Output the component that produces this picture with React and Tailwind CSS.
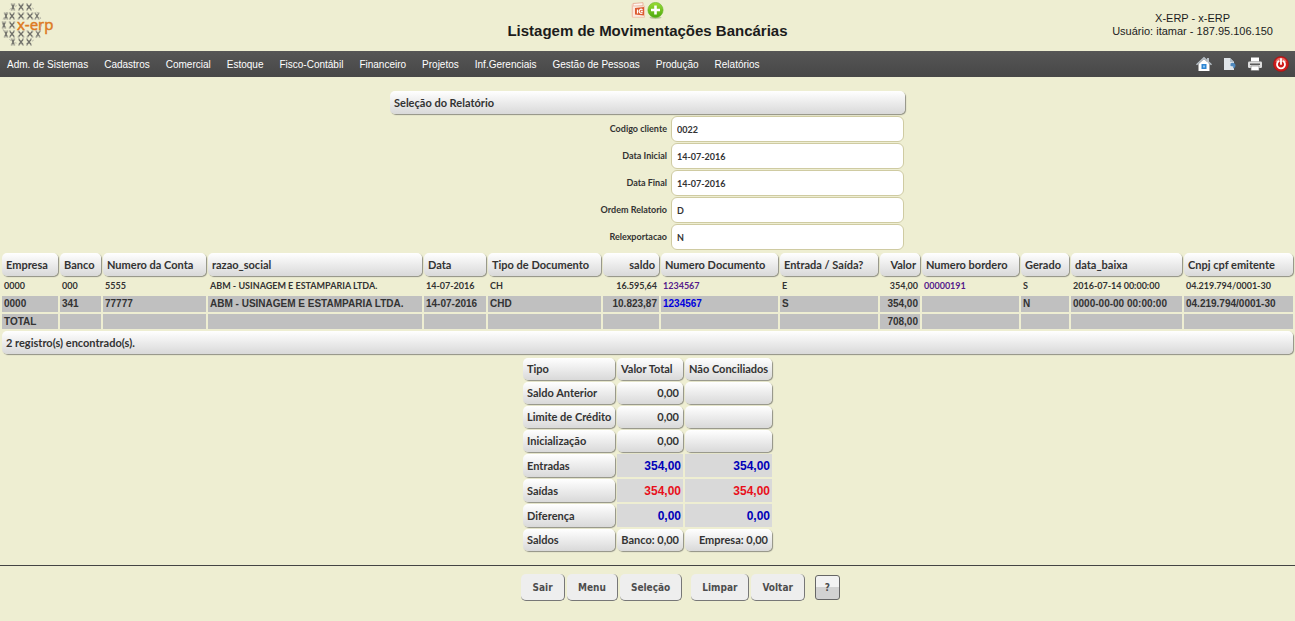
const menuItems = [
  "Adm. de Sistemas",
  "Cadastros",
  "Comercial",
  "Estoque",
  "Fisco-Contábil",
  "Financeiro",
  "Projetos",
  "Inf.Gerenciais",
  "Gestão de Pessoas",
  "Produção",
  "Relatórios",
];

const filters = [
  { id: "codigo", label: "Codigo cliente", value: "0022" },
  { id: "inicial", label: "Data Inicial", value: "14-07-2016" },
  { id: "final", label: "Data Final", value: "14-07-2016" },
  { id: "ordem", label: "Ordem Relatorio", value: "D" },
  { id: "relexportacao", label: "Relexportacao", value: "N" },
];

const columns = [
  { title: "Empresa", width: "w-[56px]" },
  { title: "Banco", width: "w-[41px]" },
  { title: "Numero da Conta", width: "w-[103px]" },
  { title: "razao_social", width: "w-auto" },
  { title: "Data", width: "w-[62px]" },
  { title: "Tipo de Documento", width: "w-[113px]" },
  { title: "saldo", width: "w-[56px]", right: true },
  { title: "Numero Documento", width: "w-[117px]" },
  { title: "Entrada / Saída?", width: "w-[98px]" },
  { title: "Valor", width: "w-[40px]", right: true },
  { title: "Numero bordero", width: "w-[97px]" },
  { title: "Gerado", width: "w-[48px]" },
  { title: "data_baixa", width: "w-[111px]" },
  { title: "Cnpj cpf emitente", width: "w-[109px]" },
];

const firstRow = [
  "0000", "000", "5555", "ABM - USINAGEM E ESTAMPARIA LTDA.", "14-07-2016", "CH", "16.595,64",
  "1234567", "E", "354,00", "00000191", "S", "2016-07-14 00:00:00", "04.219.794/0001-30",
];

const secondRow = [
  "0000", "341", "77777", "ABM - USINAGEM E ESTAMPARIA LTDA.", "14-07-2016", "CHD", "10.823,87",
  "1234567", "S", "354,00", "", "N", "0000-00-00 00:00:00", "04.219.794/0001-30",
];

const totalRow = ["TOTAL", "", "", "", "", "", "", "", "", "708,00", "", "", "", ""];

const summary = [
  { label: "Saldo Anterior", total: "0,00", pending: "" },
  { label: "Limite de Crédito", total: "0,00", pending: "" },
  { label: "Inicialização", total: "0,00", pending: "" },
  { label: "Entradas", total: "354,00", pending: "354,00", color: "text-[#0000b8]" },
  { label: "Saídas", total: "354,00", pending: "354,00", color: "text-[#e8101c]" },
  { label: "Diferença", total: "0,00", pending: "0,00", color: "text-[#0000b8]" },
  { label: "Saldos", total: "Banco: 0,00", pending: "Empresa: 0,00" },
];

const sans = "font-['Liberation_Sans',Arial,sans-serif]";
const lato = "font-['Lato',sans-serif]";
const panel =
  "rounded-[5px] bg-linear-to-b from-white to-[#d9d9d9] shadow-[1px_1px_1px_#8f8f84] text-[#333] font-bold";

// x marks that make up the globe, outer ones are narrower
const globeRows = [
  { y: 7, marks: [[13, 1.2], [21, 2], [29, 2]] },
  { y: 16, marks: [[6, 1.2], [12, 2], [21, 2.4], [30, 2.4], [37, 1.6]] },
  { y: 25, marks: [[4, 1.2], [12, 2.2]] },
  { y: 34, marks: [[6, 1.2], [12, 2], [21, 2.4], [30, 2.4], [38, 1.6]] },
  { y: 42, marks: [[13, 1.2], [21, 2], [29, 2]] },
];

function Logo() {
  return (
    <svg width="56" height="48" viewBox="0 0 56 48" aria-label="x-erp">
      <circle cx="22" cy="24.5" r="19.5" fill="none" stroke="#b5b5a6" strokeWidth="1" strokeDasharray="2 4" />
      <g fill="none">
        {globeRows.map(({ y, marks }) =>
          marks.map(([x, r]) => (
            <g key={`${x}-${y}`}>
              <path
                d={`M${x - r} ${y - 2.5}L${x + r} ${y + 2.5}M${x + r} ${y - 2.5}L${x - r} ${y + 2.5}`}
                stroke="#6f6f69"
                strokeWidth="1.3"
              />
              <path
                d={`M${x - r - 1} ${y - 3}h1.8M${x + r - 0.8} ${y - 3}h1.8M${x - r - 1} ${y + 3}h1.8M${x + r - 0.8} ${y + 3}h1.8`}
                stroke="#8d8d84"
                strokeWidth="0.9"
              />
            </g>
          ))
        )}
      </g>
      <text x="17" y="30" fontSize="15" fill="#dd7a22" stroke="#dd7a22" strokeWidth="0.5" fontFamily="Open Sans, sans-serif">
        x-erp
      </text>
    </svg>
  );
}

function SlideIcon() {
  return (
    <svg width="16" height="16" viewBox="0 0 16 16">
      <path d="M3 1.500l10-.8v3l-10 .8z" fill="#fff6f0" stroke="#e6a58c" strokeWidth=".8" />
      <path d="M1.500 2.500L3.500 1.500v12l-2 1.500z" fill="#f6cdbb" />
      <path d="M2.500 4v11.300h12V4z" fill="#fbe9df" stroke="#eebca6" strokeWidth=".8" />
      <path d="M5 6l9-1v8.500l-9-1z" fill="#dc5a30" />
      <path d="M7.500 11.500V7.500M12.500 7.800a2 2 0 1 0 0 3M10.800 9.300h2" stroke="#fff" strokeWidth="1.200" fill="none" />
    </svg>
  );
}

function PlusIcon() {
  return (
    <svg width="17" height="17" viewBox="0 0 17 17">
      <defs>
        <linearGradient id="plus" x1="0" y1="0" x2="0" y2="1">
          <stop offset="0" stopColor="#9bdc35" />
          <stop offset="1" stopColor="#4ca90e" />
        </linearGradient>
      </defs>
      <ellipse cx="8.500" cy="15.500" rx="6" ry="1.500" fill="#bcc89b" />
      <circle cx="8.500" cy="8" r="7.600" fill="url(#plus)" stroke="#62b422" strokeWidth=".6" />
      <path d="M8.500 3.500v9M4 8h9" stroke="#fff" strokeWidth="2.600" />
    </svg>
  );
}

function HomeIcon() {
  return (
    <svg width="18" height="16" viewBox="0 0 18 16">
      <path d="M12 2h2v5h-2z" fill="#b9c0c6" />
      <path d="M3.500 8L9 3l5.500 5v7h-11z" fill="#fff" />
      <path d="M1.500 8.800L9 1.800l7.500 7" fill="none" stroke="#b8c1c8" strokeWidth="1.500" />
      <rect x="6.500" y="8" width="5" height="5" fill="#2f86d3" />
      <path d="M8 9.500h2v2H8z" fill="#8ac6f2" />
    </svg>
  );
}

function PageIcon() {
  return (
    <svg width="14" height="16" viewBox="0 0 14 16">
      <path d="M1 2h6l4 4v8H1z" fill="#dfe4e8" />
      <path d="M7 2v4h4z" fill="#b3bfc9" />
      <path d="M7.500 7.500c2-1.500 5-.5 5 2 0 1.500-1 2.500-2.500 3l.3-2-2.800-.5z" fill="#4e88bd" />
    </svg>
  );
}

function PrinterIcon() {
  return (
    <svg width="16" height="16" viewBox="0 0 16 16">
      <path d="M4 1.500h8v4H4z" fill="#fff" />
      <rect x="1" y="5.500" width="14" height="6.500" rx="1.200" fill="#dedede" />
      <path d="M3 7.500h10v1.500h-10z" fill="#5b5b5b" />
      <path d="M4 10h8v4.500H4z" fill="#fff" stroke="#777" strokeWidth=".6" />
    </svg>
  );
}

function PowerIcon() {
  return (
    <svg width="16" height="16" viewBox="0 0 16 16">
      <circle cx="8" cy="8" r="7.500" fill="#cf1c1c" stroke="#a80f0f" strokeWidth=".6" />
      <path d="M2.500 6a5.700 5.700 0 0 1 11 0" fill="#e96c65" />
      <path d="M5.500 5.300a4 4 0 1 0 5 0M8 3v5" fill="none" stroke="#fff" strokeWidth="1.800" strokeLinecap="round" />
    </svg>
  );
}

function Header() {
  return (
    <header className={`grid h-[51px] grid-cols-[1fr_auto_1fr] text-[#1c1c1c] ${sans}`}>
      <div>
        <Logo />
      </div>
      <div className="flex flex-col items-center gap-1 pt-[2px]">
        <div className="flex gap-px">
          <a href="#slides" aria-label="Exportar">
            <SlideIcon />
          </a>
          <a href="#novo" aria-label="Novo">
            <PlusIcon />
          </a>
        </div>
        <h1 className="text-[15px] leading-4 font-bold whitespace-nowrap">Listagem de Movimentações Bancárias</h1>
      </div>
      <div className="justify-self-end pt-3 pr-[22px] text-center text-[11px] leading-[13px]">
        <p>X-ERP - x-ERP</p>
        <p>Usuário: itamar - 187.95.106.150</p>
      </div>
    </header>
  );
}

function MenuBar() {
  return (
    <nav
      className={`flex h-[26px] items-center justify-between bg-linear-to-b from-[#565656] to-[#474747] pr-[6px] pl-[7px] text-[10px] text-white ${sans}`}
    >
      <ul className="flex gap-4 whitespace-nowrap">
        {menuItems.map((item) => (
          <li key={item}>
            <a href="#menu">{item}</a>
          </li>
        ))}
      </ul>
      <div className="flex items-center gap-[10px]">
        <a href="#home" aria-label="Início"><HomeIcon /></a>
        <a href="#pagina" aria-label="Página"><PageIcon /></a>
        <a href="#imprimir" aria-label="Imprimir"><PrinterIcon /></a>
        <a href="#sair" aria-label="Desligar"><PowerIcon /></a>
      </div>
    </nav>
  );
}

function Filters() {
  return (
    <form className={`mx-auto mt-[14px] w-full max-w-[515px] ${lato}`}>
      <h2 className={`px-1 text-[11px] leading-[23px] ${panel}`}>Seleção do Relatório</h2>
      <div className="mt-[2px] mr-px grid gap-px">
        {filters.map(({ id, label, value }) => (
          <div key={id} className="flex items-center justify-end gap-1 text-[9px] font-bold text-[#333]">
            <label htmlFor={id}>{label}</label>
            <input
              id={id}
              defaultValue={value}
              className="h-[26px] w-[233px] rounded-[6px] border border-[#cfcba2] bg-white px-[5px]"
            />
          </div>
        ))}
      </div>
    </form>
  );
}

function Cells({ row, linkColor, cell }) {
  return row.map((value, i) => (
    <td key={columns[i].title} className={`px-0.5 py-0 ${cell} ${columns[i].right ? "text-right" : "text-left"}`}>
      {value && (i === 7 || i === 10) ? (
        <a href="#documento" className={linkColor}>{value}</a>
      ) : (
        value
      )}
    </td>
  ));
}

function Movements() {
  return (
    <table className="mt-px w-full table-fixed border-separate border-spacing-[2px] font-bold whitespace-nowrap text-[#333]">
      <colgroup>
        {columns.map(({ title, width }) => (
          <col key={title} className={width} />
        ))}
      </colgroup>
      <thead className={lato}>
        <tr>
          {columns.map(({ title, right }) => (
            <th key={title} className={`px-1 py-0 text-[11px] leading-[23px] ${panel} ${right ? "text-right" : "text-left"}`}>
              {title}
            </th>
          ))}
        </tr>
      </thead>
      <tbody>
        <tr className={`text-[9px] leading-4 ${lato}`}>
          <Cells row={firstRow} linkColor="text-[#551a8b]" cell="" />
        </tr>
        <tr className={`text-[10px] leading-4 ${sans}`}>
          <Cells row={secondRow} linkColor="text-[#0000dd]" cell="bg-[#c0c0c0]" />
        </tr>
        <tr className={`text-[10px] leading-[15px] ${sans}`}>
          <Cells row={totalRow} linkColor="" cell="bg-[#c0c0c0]" />
        </tr>
      </tbody>
      <tfoot className={lato}>
        <tr>
          <td colSpan={14} className={`px-1 py-0 text-[11px] leading-[23px] ${panel}`}>2 registro(s) encontrado(s).</td>
        </tr>
      </tfoot>
    </table>
  );
}

function Summary() {
  const head = `h-[22px] px-1 py-0 text-[11px] leading-[22px] ${panel}`;
  return (
    <table className={`mx-auto w-[253px] table-fixed border-separate border-spacing-[2px] whitespace-nowrap ${lato}`}>
      <colgroup>
        <col className="w-[92px]" />
        <col className="w-[66px]" />
        <col className="w-[87px]" />
      </colgroup>
      <thead>
        <tr>
          <th className={`text-left ${head}`}>Tipo</th>
          <th className={`text-left ${head}`}>Valor Total</th>
          <th className={`text-left ${head}`}>Não Conciliados</th>
        </tr>
      </thead>
      <tbody>
        {summary.map(({ label, total, pending, color }) => {
          const value = color
            ? `h-[23px] bg-[#d9d9d9] px-0.5 py-0 text-right text-[12px] font-bold ${sans} ${color}`
            : `text-right ${head}`;
          return (
            <tr key={label}>
              <th className={`text-left ${head}`}>{label}</th>
              <td className={value}>{total}</td>
              <td className={value}>{pending}</td>
            </tr>
          );
        })}
      </tbody>
    </table>
  );
}

function ActionButton({ children }) {
  return (
    <button
      type="button"
      className="h-[27px] min-w-[44px] rounded-[5px] border-r border-b border-[#777] bg-[#eee] px-[11px] text-[10px] font-bold text-[#4d4d4d]"
    >
      {children}
    </button>
  );
}

export default function App() {
  return (
    <div className="min-h-screen bg-[#eeeed2]">
      <Header />
      <MenuBar />
      <main>
        <Filters />
        <Movements />
        <Summary />
      </main>
      <footer className="mt-3 flex items-center justify-center border-t border-[#444] pt-2 pl-[66px] font-['DejaVu_Sans_Condensed','DejaVu_Sans',sans-serif]">
        <div className="flex gap-[2px]">
          <ActionButton>Sair</ActionButton>
          <ActionButton>Menu</ActionButton>
          <ActionButton>Seleção</ActionButton>
        </div>
        <div className="ml-[9px] flex gap-[2px]">
          <ActionButton>Limpar</ActionButton>
          <ActionButton>Voltar</ActionButton>
        </div>
        <button
          type="button"
          className="ml-[10px] h-[25px] w-[25px] rounded-[3px] border border-[#666] bg-linear-to-b from-[#f2f2f2] from-50% to-[#d2d2d2] to-50% text-[10px] font-bold text-[#4d4d4d]"
        >
          ?
        </button>
      </footer>
    </div>
  );
}
